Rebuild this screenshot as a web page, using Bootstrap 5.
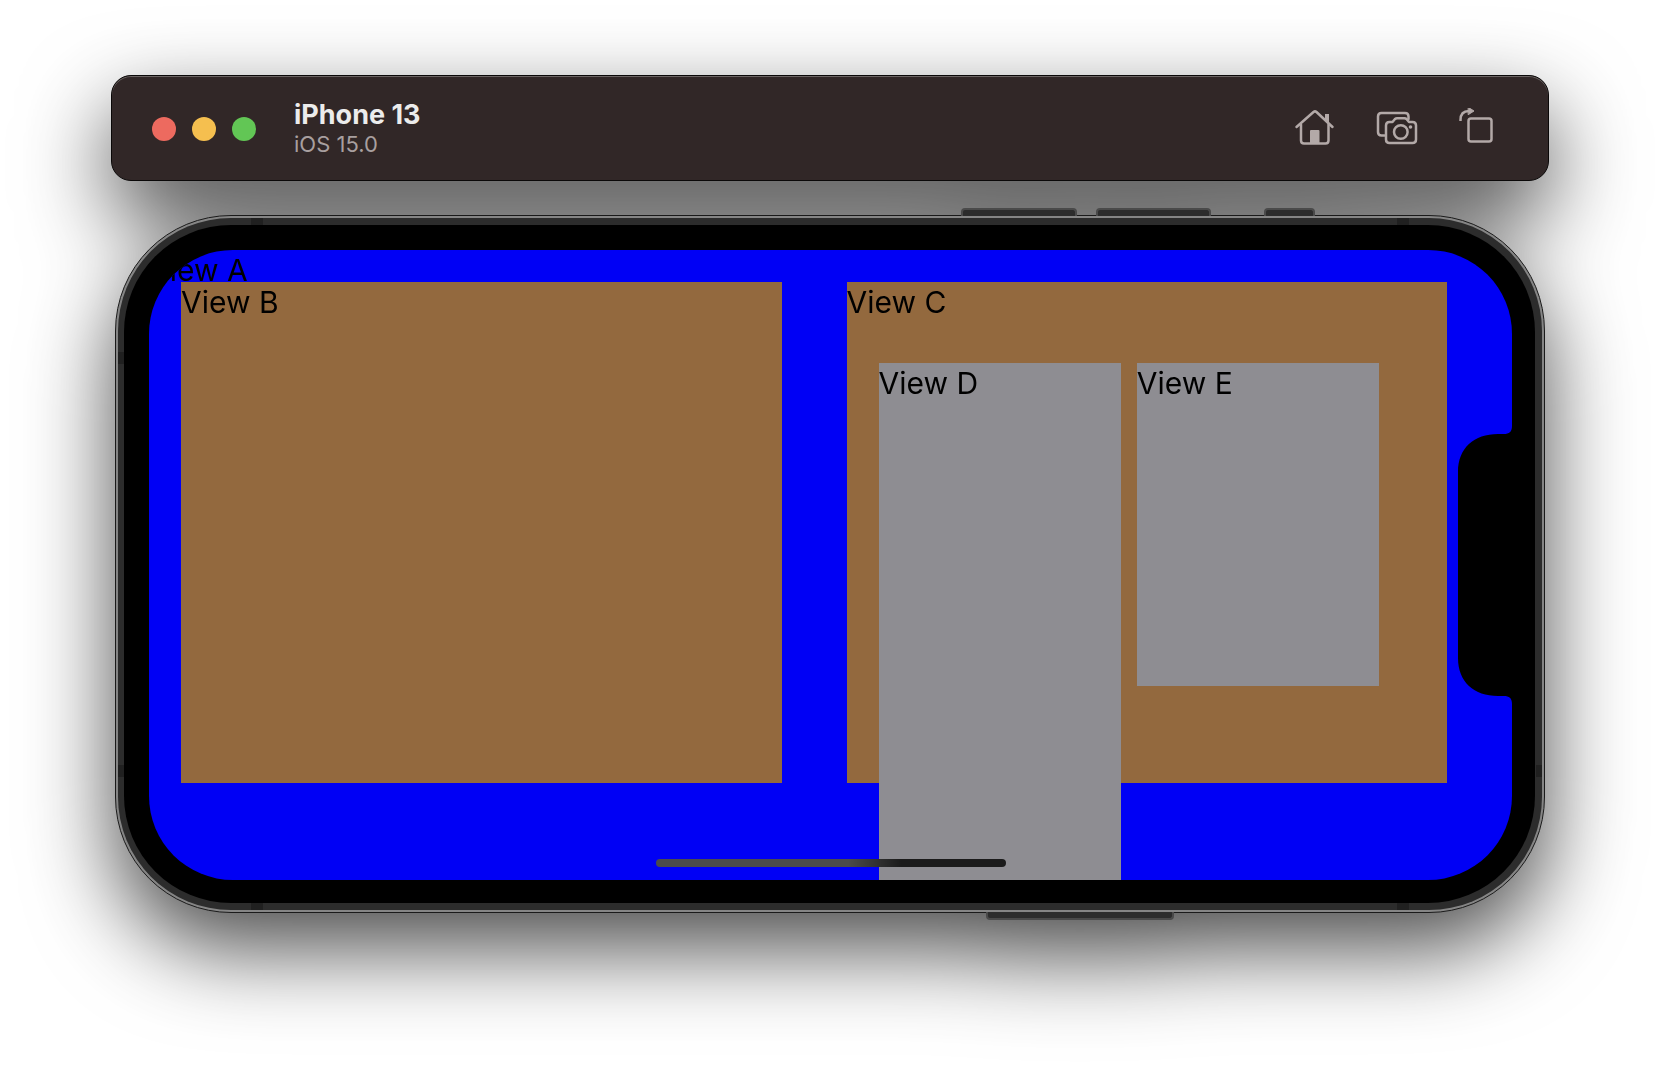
<!DOCTYPE html>
<html lang="en">
<head>
<meta charset="utf-8">
<meta name="viewport" content="width=device-width, initial-scale=1">
<title>iPhone 13 – Simulator</title>
<link href="https://cdn.jsdelivr.net/npm/bootstrap@5.3.0/dist/css/bootstrap.min.css" rel="stylesheet">
<style>
  body { font-family: Inter, "Liberation Sans", sans-serif; background: #fff; }
  .simulator { min-height: 100vh; padding: 75px 111px 0; filter: drop-shadow(0 36px 44px rgba(0,0,0,.7)); }

  /* Title bar */
  .titlebar { min-height: 106px; margin-bottom: 34px; padding: 2px 48px 0 40px; background: #312727;
    border: 1px solid #0a0808; border-radius: 20px; box-shadow: inset 0 1px 0 #6b6463; }
  .light { width: 24px; height: 24px; border-radius: 50%; border: 0; padding: 0; }
  .light-close { background: #ed6a5f; }
  .light-min { background: #f5bf4f; }
  .light-zoom { background: #62c655; }
  .device-title { margin-left: 38px; }
  .device-name { font-size: 27px; line-height: 30px; font-weight: 700; color: #ececec; }
  .device-os { font-size: 22px; line-height: 28px; color: #a89f9f; }
  .tools { gap: 40px; }
  .tool { background: none; border: 0; padding: 0; width: 42px; height: 42px; color: #b3a9a8; }
  .tool svg { display: block; fill: none; stroke: currentColor; stroke-width: 2.5px; stroke-linecap: round; stroke-linejoin: round; }

  /* Device body */
  .phone { margin: 0 4px; border: 1px solid #1a1a1a; border-radius: 116px; background: #858585; padding: 2px; }
  .phone-frame { background: #2c2c2c; border-radius: 113px; padding: 7px 7px 7px 6px; }
  .phone-bezel { background: #000; border-radius: 107px; padding: 25px 23px 23px 25px; }
  .band { background: #202020; }
  .band-h { width: 12px; height: 7px; }
  .band-v { width: 6px; height: 12px; }
  .band-top { top: 2px; }
  .band-bottom { bottom: 2px; }
  .band-start { left: 135px; }
  .band-end { right: 135px; }
  .band-left { left: 2px; }
  .band-right { right: 2px; }
  .band-upper { top: 136px; }
  .band-lower { bottom: 135px; }
  .side-key { height: 8px; background: #2c2c2c; border: 2px solid #4a4a4a; }
  .key-top { top: -8px; border-bottom: 0; border-radius: 4px 4px 0 0; }
  .key-bottom { bottom: -8px; border-top: 0; border-radius: 0 0 4px 4px; right: 370px; width: 188px; }
  .key-up { right: 467px; width: 116px; }
  .key-down { right: 333px; width: 115px; }
  .key-mute { right: 229px; width: 51px; }

  /* App screen */
  .screen { height: 630px; background: #0000f5; border-radius: 84px; }
  .view-label { height: 32px; font-size: 30px; line-height: 40px; color: #000; white-space: nowrap; }
  .view-row { padding: 0 65px 0 32px; gap: 65px; }
  .view-brown { height: 501px; background: #93693e; }
  .view-gray { background: #8e8d92; }
  .inner-row { padding: 49px 68px 0 32px; gap: 16px; }
  .view-d { height: 517px; }
  .view-e { height: 323px; }
  .notch { top: 176px; right: 0; }
  .home-bar { left: 0; right: 0; bottom: 13px; width: 350px; height: 8px; border-radius: 4px;
    background: linear-gradient(90deg, #4b4b4b 55%, #1b1b1b 70%); }
</style>
<script src="https://cdn.jsdelivr.net/npm/bootstrap@5.3.0/dist/js/bootstrap.bundle.min.js"></script>
</head>
<body>
<main class="simulator">
  <header class="titlebar d-flex align-items-center">
    <div class="d-flex gap-3">
      <button class="light light-close" type="button" aria-label="Close"></button>
      <button class="light light-min" type="button" aria-label="Minimize"></button>
      <button class="light light-zoom" type="button" aria-label="Zoom"></button>
    </div>
    <div class="device-title flex-grow-1">
      <div class="device-name">iPhone 13</div>
      <div class="device-os">iOS 15.0</div>
    </div>
    <div class="tools d-flex">
      <button class="tool" type="button" aria-label="Home">
        <svg width="42" height="42" viewBox="0 0 42 42">
          <path d="M2.500 19 19.500 4Q21 2.800 22.500 4L38.500 19"/>
          <path d="M7 16.500V32.500Q7 35.500 10 35.500H31.500Q34.500 35.500 34.500 32.500V16.500"/>
          <path d="M31 6H35V16L31 12.500Z" fill="currentColor" stroke="none"/>
          <path d="M16 23Q16 22 17 22H24.500Q25.500 22 25.500 23V36H16Z" fill="currentColor" stroke="none"/>
        </svg>
      </button>
      <button class="tool" type="button" aria-label="Screenshot">
        <svg width="42" height="42" viewBox="0 0 42 42">
          <path d="M8.500 27.500H5.500Q2 27.500 2 24V8.500Q2 5 5.500 5H29Q32.500 5 32.500 8.500V11"/>
          <path d="M13.500 14H16.500L19 11Q19.800 10.300 21 10.300H28.500Q29.700 10.300 30.500 11L33 14H36.500Q40 14 40 17.500V31.500Q40 35 36.500 35H13.500Q10 35 10 31.500V17.500Q10 14 13.500 14Z"/>
          <circle cx="24.800" cy="24" r="6.800"/>
          <circle cx="34.500" cy="19" r="1.800" fill="currentColor" stroke="none"/>
        </svg>
      </button>
      <button class="tool" type="button" aria-label="Rotate">
        <svg width="42" height="42" viewBox="0 0 42 42">
          <rect x="10.500" y="10.500" width="23" height="23" rx="2.500"/>
          <path d="M2.500 13V12Q2.500 3 11 3" stroke-linecap="butt"/>
          <path d="M10.500 -0.500 16 3 10.500 6.500Z" fill="currentColor" style="stroke-width:1px"/>
        </svg>
      </button>
    </div>
  </header>

  <section class="phone position-relative">
    <span class="side-key key-top key-up position-absolute"></span>
    <span class="side-key key-top key-down position-absolute"></span>
    <span class="side-key key-top key-mute position-absolute"></span>
    <span class="side-key key-bottom position-absolute"></span>
    <div class="phone-frame">
      <div class="phone-bezel">
        <div class="screen position-relative overflow-hidden">
          <div class="view-label">View A</div>
          <div class="view-row d-flex">
            <div class="view-brown col">
              <div class="view-label">View B</div>
            </div>
            <div class="view-brown col">
              <div class="view-label">View C</div>
              <div class="inner-row d-flex align-items-start">
                <div class="view-gray view-d col"><div class="view-label">View D</div></div>
                <div class="view-gray view-e col"><div class="view-label">View E</div></div>
              </div>
            </div>
          </div>
          <svg class="notch position-absolute" width="54" height="278" viewBox="0 0 54 278">
            <path d="M54 0C54 6 51 8 46 8H40C16 8 0 22 0 46V232C0 256 16 270 40 270H46C51 270 54 272 54 278Z"/>
          </svg>
          <div class="home-bar position-absolute mx-auto"></div>
        </div>
      </div>
    </div>
    <span class="band band-h band-top band-start position-absolute"></span>
    <span class="band band-h band-top band-end position-absolute"></span>
    <span class="band band-h band-bottom band-start position-absolute"></span>
    <span class="band band-h band-bottom band-end position-absolute"></span>
    <span class="band band-v band-left band-upper position-absolute"></span>
    <span class="band band-v band-left band-lower position-absolute"></span>
    <span class="band band-v band-right band-lower position-absolute"></span>
  </section>
</main>
</body>
</html>
